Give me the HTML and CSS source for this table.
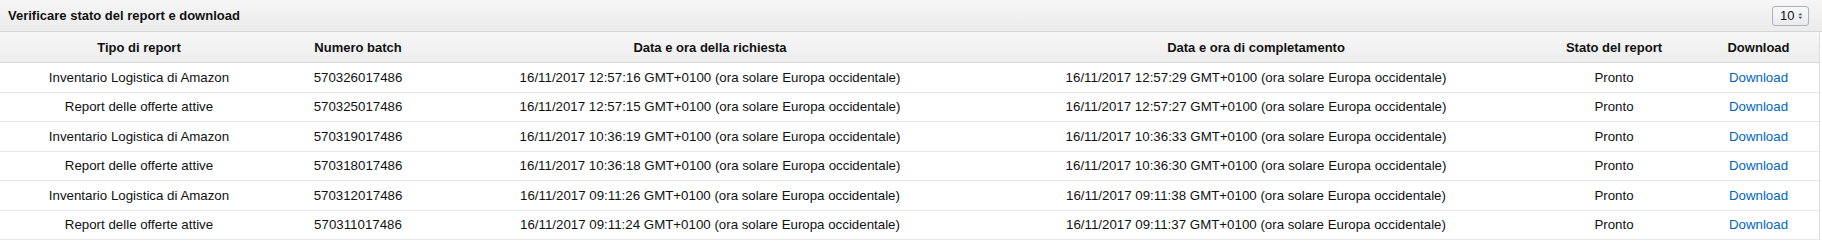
FILE: index.html
```html
<!DOCTYPE html>
<html lang="it">
<head>
<meta charset="utf-8">
<title>Verificare stato del report e download</title>
<link rel="stylesheet" href="styles.css">
</head>
<body>
<div class="panel">
  <div class="panel-head">
    <h2 class="panel-title">Verificare stato del report e download</h2>
    <div class="page-size">
      <span class="page-size-value">10</span>
      <svg class="page-size-arrows" width="7" height="10" viewBox="0 0 7 10"><path d="M3.5 0.5 L6.5 4 H0.5 Z M3.5 9.5 L6.5 6 H0.5 Z" fill="#555"/></svg>
    </div>
  </div>
  <div class="table-wrap">
    <table class="reports">
      <colgroup>
        <col class="c-type"><col class="c-batch"><col class="c-req"><col class="c-done"><col class="c-state"><col class="c-dl">
      </colgroup>
      <thead>
        <tr>
          <th>Tipo di report</th>
          <th>Numero batch</th>
          <th>Data e ora della richiesta</th>
          <th>Data e ora di completamento</th>
          <th>Stato del report</th>
          <th>Download</th>
        </tr>
      </thead>
      <tbody>
        <tr>
          <td>Inventario Logistica di Amazon</td>
          <td>570326017486</td>
          <td>16/11/2017 12:57:16 GMT+0100 (ora solare Europa occidentale)</td>
          <td>16/11/2017 12:57:29 GMT+0100 (ora solare Europa occidentale)</td>
          <td>Pronto</td>
          <td><a href="#">Download</a></td>
        </tr>
        <tr>
          <td>Report delle offerte attive</td>
          <td>570325017486</td>
          <td>16/11/2017 12:57:15 GMT+0100 (ora solare Europa occidentale)</td>
          <td>16/11/2017 12:57:27 GMT+0100 (ora solare Europa occidentale)</td>
          <td>Pronto</td>
          <td><a href="#">Download</a></td>
        </tr>
        <tr>
          <td>Inventario Logistica di Amazon</td>
          <td>570319017486</td>
          <td>16/11/2017 10:36:19 GMT+0100 (ora solare Europa occidentale)</td>
          <td>16/11/2017 10:36:33 GMT+0100 (ora solare Europa occidentale)</td>
          <td>Pronto</td>
          <td><a href="#">Download</a></td>
        </tr>
        <tr>
          <td>Report delle offerte attive</td>
          <td>570318017486</td>
          <td>16/11/2017 10:36:18 GMT+0100 (ora solare Europa occidentale)</td>
          <td>16/11/2017 10:36:30 GMT+0100 (ora solare Europa occidentale)</td>
          <td>Pronto</td>
          <td><a href="#">Download</a></td>
        </tr>
        <tr>
          <td>Inventario Logistica di Amazon</td>
          <td>570312017486</td>
          <td>16/11/2017 09:11:26 GMT+0100 (ora solare Europa occidentale)</td>
          <td>16/11/2017 09:11:38 GMT+0100 (ora solare Europa occidentale)</td>
          <td>Pronto</td>
          <td><a href="#">Download</a></td>
        </tr>
        <tr>
          <td>Report delle offerte attive</td>
          <td>570311017486</td>
          <td>16/11/2017 09:11:24 GMT+0100 (ora solare Europa occidentale)</td>
          <td>16/11/2017 09:11:37 GMT+0100 (ora solare Europa occidentale)</td>
          <td>Pronto</td>
          <td><a href="#">Download</a></td>
        </tr>
      </tbody>
    </table>
  </div>
</div>
</body>
</html>
```
FILE: styles.css
```css
html, body {
  margin: 0;
  padding: 0;
  background: #ffffff;
}
body {
  font-family: "Liberation Sans", Arial, sans-serif;
  font-size: 13.3px;
  color: #111111;
}
.panel {
  width: 100%;
}
.panel-head {
  display: flex;
  align-items: center;
  justify-content: space-between;
  height: 31px;
  padding: 0 13px 0 8px;
  background: linear-gradient(#f6f6f6, #ebebeb);
  border-bottom: 1px solid #d5d5d5;
}
.panel-title {
  margin: 0;
  font-size: 13px;
  font-weight: bold;
  color: #111111;
}
.page-size {
  display: flex;
  align-items: center;
  gap: 4px;
  box-sizing: border-box;
  height: 20px;
  width: 37px;
  padding: 0 5px 0 7px;
  border: 1px solid #adb1b8;
  border-radius: 3px;
  background: linear-gradient(#f7f8fa, #e9ebee);
  font-size: 13px;
  color: #111111;
}
.table-wrap {
  margin-right: 2px;
  border-right: 1px solid #dddddd;
}
.reports {
  width: 100%;
  border-collapse: collapse;
  table-layout: fixed;
}
.c-type { width: 278px; }
.c-batch { width: 160px; }
.c-req { width: 544px; }
.c-done { width: 548px; }
.c-state { width: 168px; }
.c-dl { width: auto; }
.reports th {
  height: 30px;
  padding: 0;
  font-size: 13px;
  font-weight: bold;
  text-align: center;
  background: linear-gradient(#f7f7f7, #ededed);
  border-bottom: 1px solid #d8d8d8;
}
.reports td {
  height: 28.5px;
  padding: 0;
  text-align: center;
  border-bottom: 1px solid #e7e7e7;
  white-space: nowrap;
}
.reports a {
  color: #0066c0;
  text-decoration: none;
}
```
